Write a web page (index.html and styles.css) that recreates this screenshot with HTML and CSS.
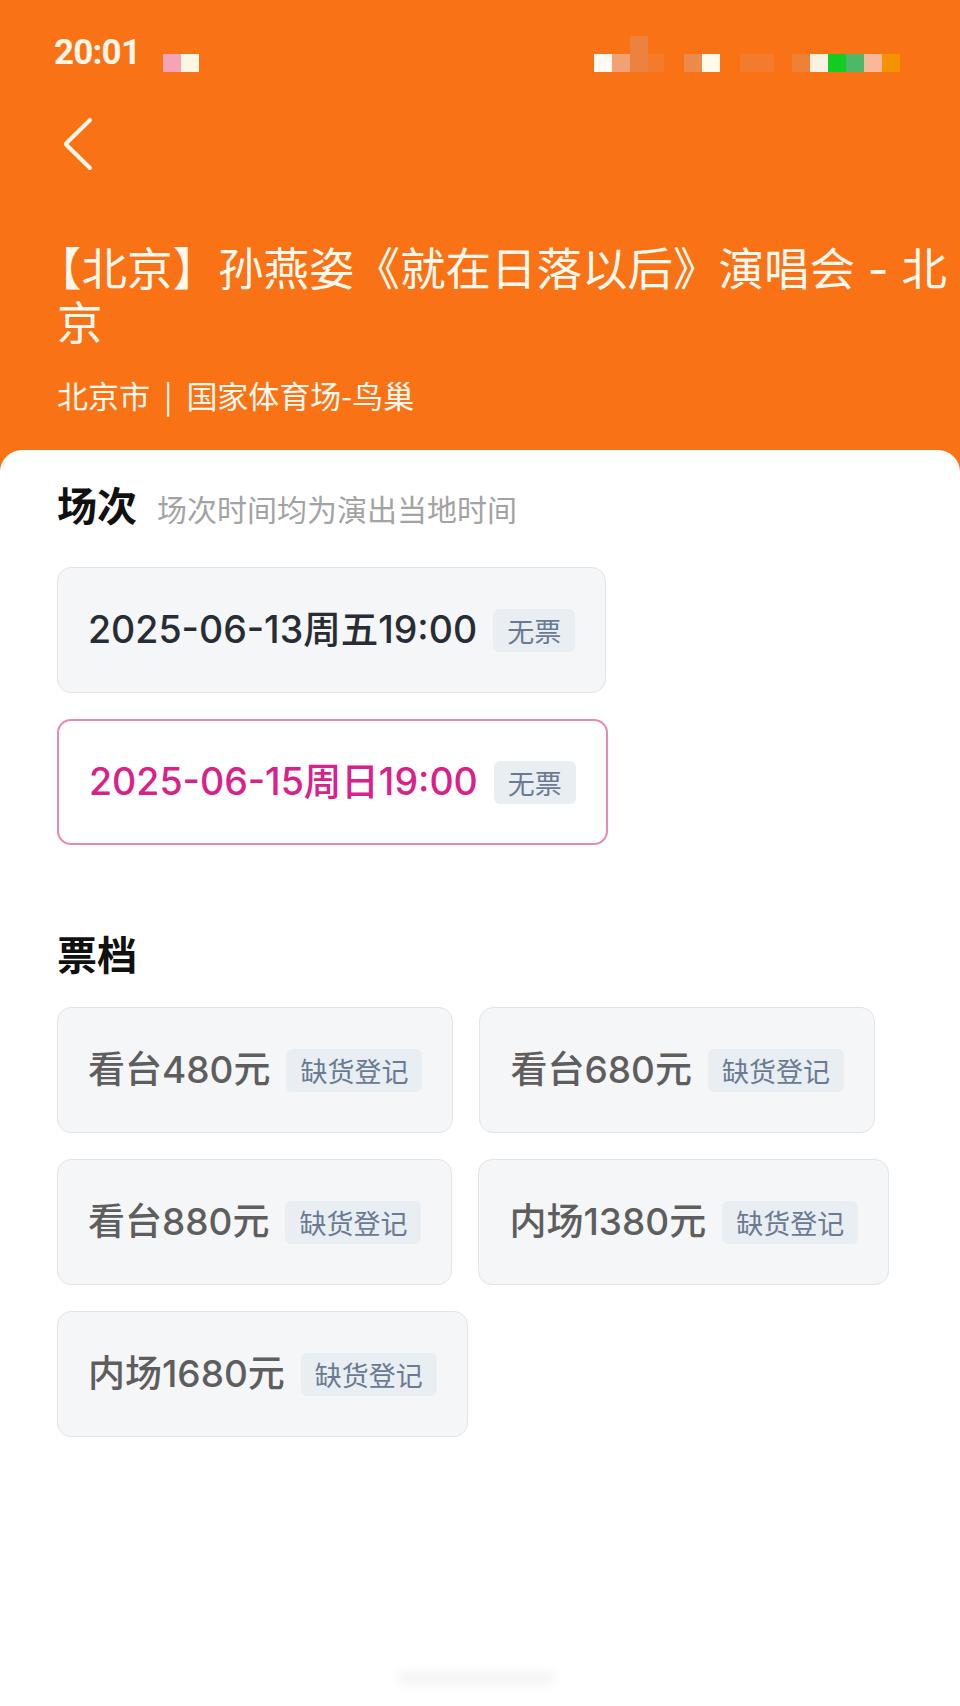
FILE: index.html
```html
<!DOCTYPE html>
<html lang="zh-CN">
<head>
<meta charset="utf-8">
<title>场次票档</title>
<link rel="stylesheet" href="styles.css">
</head>
<body>
<div class="app">
  <header class="header">
    <div class="status">
      <span class="time">20:01</span>
      <svg class="dots-left" width="36" height="18" viewBox="0 0 36 18">
        <rect x="0" y="0" width="18" height="18" fill="#f5a4b6"/>
        <rect x="18" y="0" width="18" height="18" fill="#fcf6e4"/>
      </svg>
      <svg class="dots-right" width="306" height="36" viewBox="0 0 306 36">
        <rect x="0" y="18" width="18" height="18" fill="#fffaf2"/>
        <rect x="18" y="18" width="18" height="18" fill="#f2a074"/>
        <rect x="36" y="0" width="18" height="36" fill="#ec8240"/>
        <rect x="54" y="18" width="16" height="18" fill="#f47a2c"/>
        <rect x="90" y="18" width="18" height="18" fill="#ec8a4c"/>
        <rect x="108" y="18" width="18" height="18" fill="#fffbea"/>
        <rect x="146" y="18" width="34" height="18" fill="#f27b2e"/>
        <rect x="198" y="18" width="18" height="18" fill="#ef8036"/>
        <rect x="216" y="18" width="18" height="18" fill="#fbf1de"/>
        <rect x="234" y="18" width="18" height="18" fill="#12cc22"/>
        <rect x="252" y="18" width="18" height="18" fill="#4cb868"/>
        <rect x="270" y="18" width="18" height="18" fill="#fbb898"/>
        <rect x="288" y="18" width="18" height="18" fill="#f59200"/>
      </svg>
    </div>
    <nav class="nav">
      <svg class="back" width="36" height="56" viewBox="0 0 36 56" fill="none">
        <path d="M30 4 L6.5 27 Q5.5 28 6.5 29 L30 52" stroke="#fff7ec" stroke-width="4" stroke-linecap="round" stroke-linejoin="round"/>
      </svg>
    </nav>
    <h1 class="title">【北京】孙燕姿《就在日落以后》演唱会 - 北京</h1>
    <p class="venue">北京市<span class="sep">|</span>国家体育场-鸟巢</p>
  </header>

  <main class="content">
    <div class="section-head">
      <h2 class="section-title">场次</h2>
      <span class="hint">场次时间均为演出当地时间</span>
    </div>
    <div class="sessions">
      <div class="card session">
        <span class="label">2025-06-13周五19:00</span>
        <span class="badge">无票</span>
      </div>
      <div class="card session selected">
        <span class="label">2025-06-15周日19:00</span>
        <span class="badge">无票</span>
      </div>
    </div>

    <div class="section-head tiers-head">
      <h2 class="section-title">票档</h2>
    </div>
    <div class="tickets">
      <div class="card ticket"><span class="label">看台480元</span><span class="badge">缺货登记</span></div>
      <div class="card ticket"><span class="label">看台680元</span><span class="badge">缺货登记</span></div>
      <div class="card ticket"><span class="label">看台880元</span><span class="badge">缺货登记</span></div>
      <div class="card ticket"><span class="label">内场1380元</span><span class="badge">缺货登记</span></div>
      <div class="card ticket"><span class="label">内场1680元</span><span class="badge">缺货登记</span></div>
    </div>
  </main>
  <div class="home-indicator"></div>
</div>
</body>
</html>
```

FILE: styles.css
```css
* {
  box-sizing: border-box;
}

html, body {
  margin: 0;
  padding: 0;
}

body {
  width: 960px;
  font-family: Inter, "Noto Sans CJK SC", sans-serif;
  background: #ffffff;
}

.app {
  position: relative;
  min-height: 1706px;
  display: flex;
  flex-direction: column;
  background: #f97316;
}

.header {
  color: #fff8ee;
}

.status {
  display: flex;
  align-items: flex-start;
  height: 100px;
  padding-left: 54px;
}

.time {
  margin-top: 35px;
  font-family: Roboto, sans-serif;
  font-weight: 700;
  font-size: 35px;
  line-height: 35px;
  letter-spacing: -0.8px;
  color: #fff6e8;
}

.dots-left {
  display: block;
  margin-top: 54px;
  margin-left: 23px;
}

.dots-right {
  display: block;
  margin-top: 36px;
  margin-left: auto;
  margin-right: 60px;
}

.nav {
  height: 90px;
  padding-left: 60px;
}

.back {
  display: block;
  margin-top: 16px;
}

.title {
  margin: 37px 0 0;
  padding: 0 0 0 57px;
  text-indent: -21px;
  font-family: Inter, "Noto Sans CJK SC", sans-serif;
  font-weight: 400;
  font-size: 45.5px;
  line-height: 54px;
}

.venue {
  margin: 24px 0 0;
  padding: 0 0 35px 57px;
  font-family: "Noto Sans CJK SC", sans-serif;
  font-weight: 400;
  font-size: 31px;
  line-height: 40px;
}

.sep {
  margin: 0 14px;
}

.content {
  flex: 1;
  background: #ffffff;
  border-radius: 22px 22px 0 0;
  padding: 30px 57px 0;
}

.section-head {
  display: flex;
  align-items: baseline;
}

.section-title {
  margin: 0;
  font-family: "Noto Sans CJK SC", sans-serif;
  font-weight: 700;
  font-size: 40px;
  line-height: 48px;
  color: #111111;
}

.hint {
  margin-left: 20px;
  font-family: "Noto Sans CJK SC", sans-serif;
  font-size: 30px;
  color: #a3a3a3;
}

.sessions {
  margin-top: 37px;
  display: flex;
  flex-direction: column;
  align-items: flex-start;
  gap: 26px;
}

.card {
  display: inline-flex;
  align-items: center;
  gap: 16px;
  height: 126px;
  padding: 0 30px;
  background: #f5f6f8;
  border: 1.5px solid #e2e4e8;
  border-radius: 14px;
}

.label {
  font-weight: 500;
  font-size: 37px;
  line-height: 48px;
  white-space: nowrap;
}

.session .label {
  font-size: 37.5px;
  color: #282c34;
}

.session.selected {
  background: #ffffff;
  border: 2px solid #e68ab3;
}

.session.selected .label {
  color: #d8228a;
}

.badge {
  display: inline-flex;
  align-items: center;
  height: 43px;
  padding: 0 14px;
  border-radius: 6px;
  background: #e9eef3;
  color: #6a7a92;
  font-family: "Noto Sans CJK SC", sans-serif;
  font-size: 27px;
  white-space: nowrap;
}

.tiers-head {
  margin-top: 84px;
}

.tickets {
  margin-top: 30px;
  display: flex;
  flex-wrap: wrap;
  gap: 26px 26px;
}

.ticket .label {
  color: #5e5e5e;
}

.home-indicator {
  position: absolute;
  left: 398px;
  top: 1671px;
  width: 156px;
  height: 14px;
  background: #ececec;
  filter: blur(5px);
  opacity: 0.5;
}
```
